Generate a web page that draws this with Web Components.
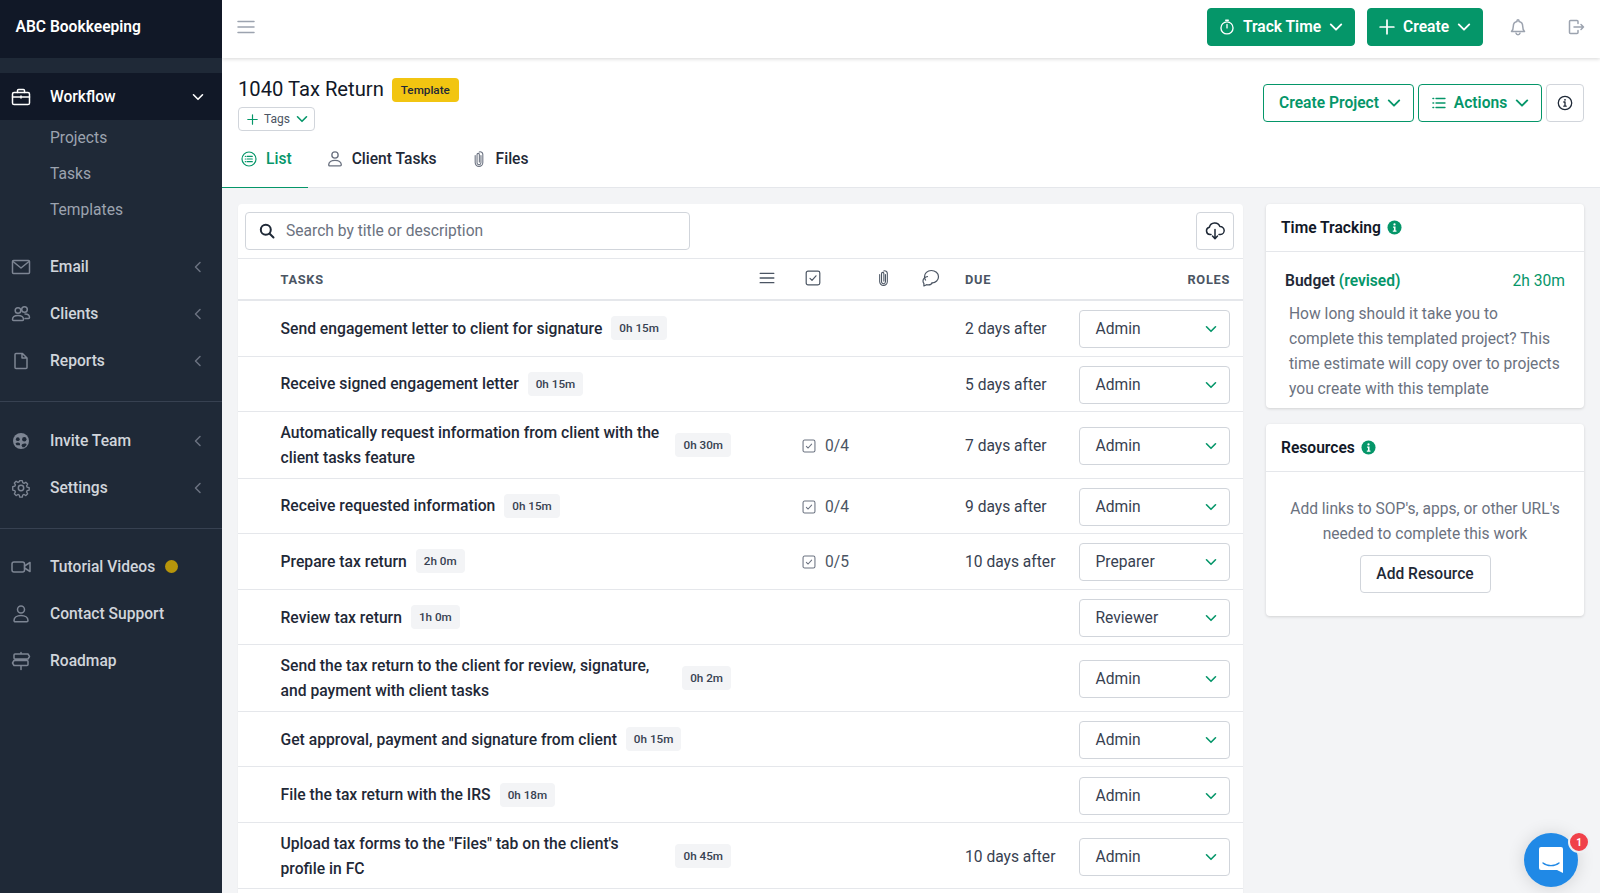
<!DOCTYPE html>
<html lang="en"><head><meta charset="utf-8"><title>1040 Tax Return</title>
<style>
html,body{margin:0;padding:0;height:893px;overflow:hidden;background:#f3f4f6;font-family:Roboto,"Liberation Sans",sans-serif;color:#1f2937}
</style></head><body>
<app-shell>
  <app-sidebar slot="sidebar">
    <div slot="brand">ABC Bookkeeping</div>
    <nav-item icon="briefcase" caret="down" active>Workflow</nav-item>
    <sub-item>Projects</sub-item><sub-item>Tasks</sub-item><sub-item>Templates</sub-item>
    <nav-gap h="15.5"></nav-gap>
    <nav-item icon="mail" caret="left">Email</nav-item>
    <nav-item icon="users" caret="left">Clients</nav-item>
    <nav-item icon="doc" caret="left">Reports</nav-item>
    <nav-gap h="17.5" line after="15.5"></nav-gap>
    <nav-item icon="team" caret="left">Invite Team</nav-item>
    <nav-item icon="gear" caret="left">Settings</nav-item>
    <nav-gap h="17" line after="14.7"></nav-gap>
    <nav-item icon="video" dot>Tutorial Videos</nav-item>
    <nav-item icon="user">Contact Support</nav-item>
    <nav-item icon="sign">Roadmap</nav-item>
  </app-sidebar>
  <top-bar slot="top"></top-bar>
  <page-head slot="head"></page-head>
  <task-card slot="list">
    <task-row time="0h 15m" due="2 days after" role="Admin">Send engagement letter to client for signature</task-row>
    <task-row time="0h 15m" due="5 days after" role="Admin">Receive signed engagement letter</task-row>
    <task-row time="0h 30m" due="7 days after" role="Admin" checks="0/4">Automatically request information from client with the client tasks feature</task-row>
    <task-row time="0h 15m" due="9 days after" role="Admin" checks="0/4">Receive requested information</task-row>
    <task-row time="2h 0m" due="10 days after" role="Preparer" checks="0/5">Prepare tax return</task-row>
    <task-row time="1h 0m" role="Reviewer">Review tax return</task-row>
    <task-row time="0h 2m" role="Admin">Send the tax return to the client for review, signature, and payment with client tasks</task-row>
    <task-row time="0h 15m" role="Admin">Get approval, payment and signature from client</task-row>
    <task-row time="0h 18m" role="Admin">File the tax return with the IRS</task-row>
    <task-row time="0h 45m" due="10 days after" role="Admin">Upload tax forms to the "Files" tab on the client's profile in FC</task-row>
  </task-card>
  <side-panel slot="side"></side-panel>
</app-shell>
<chat-bubble></chat-bubble>
<script>
const S='fill="none" stroke="currentColor" stroke-width="1.5" stroke-linecap="round" stroke-linejoin="round"';
const ICONS={
 briefcase:`<svg viewBox="0 0 20 20" ${S}><rect x="1.5" y="5.5" width="17" height="12" rx="1.6"/><path d="M6.5 5.500V3.600c0-.6.5-1.100 1.100-1.100h4.800c.6 0 1.100.5 1.100 1.100v1.900M1.500 10h17M10 9v2"/></svg>`,
 mail:`<svg viewBox="0 0 20 20" ${S} stroke-width="1.2"><rect x="1.5" y="3.5" width="17" height="13" rx="1"/><path d="M2 4.500l8 6.500 8-6.500"/></svg>`,
 users:`<svg viewBox="0 0 20 20" ${S} stroke-width="1.2"><circle cx="7" cy="6.500" r="2.800"/><circle cx="13.500" cy="5.500" r="2.800"/><path d="M1.500 15.500c0-2.800 2.300-4 5.500-4s5.500 1.200 5.500 4c0 .6-.4 1-1 1h-9c-.6 0-1-.4-1-1zM14 10c2.700 0 4.500 1.200 4.500 3.500 0 .6-.4 1-1 1H14"/></svg>`,
 doc:`<svg viewBox="0 0 20 20" ${S} stroke-width="1.2"><path d="M5 2.500h6.500L16 7v9.500c0 .6-.5 1-1 1H5c-.6 0-1-.4-1-1v-13c0-.6.4-1 1-1zM11 2.500V7h5"/></svg>`,
 team:`<svg viewBox="0 0 20 20"><circle cx="10" cy="10" r="8" fill="currentColor"/><circle cx="6.800" cy="8.200" r="1.900" fill="#1f2937"/><circle cx="13.300" cy="8.200" r="2.200" fill="#1f2937"/><path d="M4.500 12.500c1-1.200 3.500-1.200 4.500 0v1.800H5.600zM10.500 14.500c0-2.400 5.500-2.800 5-.5l-2 2.200h-2z" fill="#1f2937"/></svg>`,
 gear:`<svg viewBox="0 0 20 20" ${S} stroke-width="1.2"><circle cx="10" cy="10" r="2.700"/><path d="M8.600 1.800h2.800l.5 2.300 1.500.7 2-1.200 2 2-1.200 2 .6 1.500 2.300.6v2.600l-2.300.6-.6 1.500 1.200 2-2 2-2-1.200-1.500.6-.5 2.300H8.600l-.5-2.300-1.500-.6-2 1.200-2-2 1.200-2-.7-1.500-2.300-.6V8.600l2.300-.6.700-1.500-1.200-2 2-2 2 1.200 1.500-.7z" transform="translate(1 1) scale(.9)"/></svg>`,
 video:`<svg viewBox="0 0 20 20" ${S} stroke-width="1.200"><rect x="1" y="5" width="12.500" height="10" rx="2"/><path d="M13.500 9l5.500-3.500v9L13.500 11"/></svg>`,
 user:`<svg viewBox="0 0 20 20" ${S} stroke-width="1.200"><circle cx="10" cy="5.500" r="3.500"/><path d="M3 16.500c0-3 3-5 7-5s7 2 7 5c0 .8-.5 1.200-1.200 1.200H4.200c-.7 0-1.200-.4-1.200-1.200z"/></svg>`,
 sign:`<svg viewBox="0 0 20 20" ${S} stroke-width="1.200"><path d="M4 3h13l1.500 2.500L17 8H4c-.7 0-1-.4-1-1V4c0-.6.3-1 1-1zM16 9.500H3L1.500 12 3 14.500h13c.7 0 1-.4 1-1v-3c0-.6-.3-1-1-1zM10 1.500V3M10 8v1.500M10 14.500v4"/></svg>`,
 down:`<svg viewBox="0 0 12 12" fill="none" stroke="currentColor" stroke-width="1.600" stroke-linecap="round" stroke-linejoin="round"><path d="M1.500 3.800L6 8.300l4.500-4.500"/></svg>`,
 left:`<svg viewBox="0 0 12 12" fill="none" stroke="currentColor" stroke-width="1.500" stroke-linecap="round" stroke-linejoin="round"><path d="M8 1.500L3.500 6 8 10.500"/></svg>`,
 menu:`<svg viewBox="0 0 18 14" fill="none" stroke="currentColor" stroke-width="1.500" stroke-linecap="round"><path d="M1 1.500h16M1 7h16M1 12.500h16"/></svg>`,
 stopwatch:`<svg viewBox="0 0 18 18" fill="none" stroke="currentColor" stroke-width="1.500" stroke-linecap="round"><circle cx="9" cy="10" r="6.800"/><path d="M9 6.200V10M7.500 1.400h3"/></svg>`,
 plus:`<svg viewBox="0 0 14 14" fill="none" stroke="currentColor" stroke-width="1.500" stroke-linecap="round"><path d="M7 1v12M1 7h12"/></svg>`,
 bell:`<svg viewBox="0 0 18 18" ${S} stroke-width="1.200"><path d="M9 1.800a1 1 0 011 1v.6c2.300.5 3.700 2.400 3.700 4.800 0 3 .8 4.200 1.800 5.300H2.500c1-1.100 1.800-2.300 1.800-5.300 0-2.400 1.400-4.300 3.700-4.800v-.6a1 1 0 011-1zM7 15.200c.2 1 1 1.500 2 1.500s1.800-.5 2-1.500"/></svg>`,
 logout:`<svg viewBox="0 0 18 18" ${S} stroke-width="1.200"><path d="M11 5.500V3.500c0-.6-.4-1-1-1H3.500c-.6 0-1 .4-1 1v11c0 .6.4 1 1 1H10c.6 0 1-.4 1-1v-2M7 9h9.500M14 6.500L16.500 9 14 11.500"/></svg>`,
 lines:`<svg viewBox="0 0 14 12" fill="none" stroke="currentColor" stroke-width="1.300" stroke-linecap="round"><path d="M4 1.500h9M4 6h9M4 10.500h9"/><path d="M1 1.500h.6M1 6h.6M1 10.500h.6" stroke-width="1.600"/></svg>`,
 info:`<svg viewBox="0 0 16 16" fill="none" stroke="currentColor" stroke-width="1.300"><circle cx="8" cy="8" r="6.700"/><path d="M8 7v4M6.800 11.200h2.400M6.800 7h1.200" stroke-linecap="round"/><circle cx="8" cy="4.800" r=".9" fill="currentColor" stroke="none"/></svg>`,
 listc:`<svg viewBox="0 0 16 16" fill="none" stroke="currentColor" stroke-width="1.200" stroke-linecap="round"><circle cx="8" cy="8" r="7"/><path d="M6 5.300h5.300M6 8h5.300M6 10.700h5.300M4.300 5.300h.2M4.300 8h.2M4.300 10.700h.2"/></svg>`,
 clip:`<svg viewBox="0 0 12 18" fill="none" stroke="currentColor" stroke-width="1.200" stroke-linecap="round"><path d="M8.200 5v8.200a2.200 2.200 0 01-4.400 0V4a1.300 1.300 0 012.600 0v8.500"/><path d="M1.700 5v8a4.300 4.300 0 008.600 0V3.800a3 3 0 00-4-2.700"/></svg>`,
 search:`<svg viewBox="0 0 16 16" fill="none" stroke="currentColor" stroke-width="2" stroke-linecap="round"><circle cx="6.800" cy="6.800" r="5"/><path d="M10.700 10.700L14.500 14.500"/></svg>`,
 cloud:`<svg viewBox="0 0 20 20" ${S} stroke-width="1.300"><path d="M6 13.500H5a3.700 3.700 0 01-.6-7.300 5.500 5.500 0 0110.500-.6 3.900 3.900 0 01.6 7.900H14"/><path d="M10 8.500v9M7.500 15l2.500 2.700L12.500 15"/></svg>`,
 check:`<svg viewBox="0 0 16 16" fill="none" stroke="currentColor" stroke-width="1.200" stroke-linejoin="round" stroke-linecap="round"><rect x="1.200" y="1.200" width="13.600" height="13.600" rx="1.800"/><path d="M5 8.300l2 2 4-4.500"/></svg>`,
 comment:`<svg viewBox="0 0 20 18" fill="none" stroke="currentColor" stroke-width="1.200" stroke-linejoin="round"><path d="M4.800 11.500c-.8-1-1.300-2.300-1.300-3.800C3.500 4.300 6.300 1.500 10.300 1.500s7.200 2.800 7.200 6.200c0 3.300-2.800 6-6.300 6.300"/><path d="M7 7.500c-3 .4-5 2.200-5 4.500 0 1 .3 1.800.9 2.500v2.500l2.600-1.300c2.700.6 5.200-.4 5.900-2.500"/></svg>`,
 solidinfo:`<svg viewBox="0 0 16 16"><circle cx="8" cy="8" r="7.500" fill="currentColor"/><circle cx="8" cy="4.700" r="1.200" fill="#fff"/><path d="M6.500 7h2.600v4.300h1v1.200H6.200v-1.200h1.200V8.200h-.9z" fill="#fff"/></svg>`
};
function def(name,html){
  customElements.define(name,class extends HTMLElement{
    constructor(){super();this.attachShadow({mode:'open'})}
    connectedCallback(){
      if(this._d)return;this._d=1;
      const get=k=>this.getAttribute(k);
      this.shadowRoot.innerHTML=typeof html==='function'?html(get,this):html;
    }
  });
}
def('x-icon',(g)=>`<style>:host{display:inline-flex;flex:none;width:${g('w')||16}px;height:${g('h')||g('w')||16}px}svg{width:100%;height:100%;display:block}</style>${ICONS[g('name')]||''}`);
def('app-shell',`<style>
:host{display:grid;grid-template-columns:222px 1fr;height:893px;overflow:hidden}
.side{grid-row:1;height:893px}
.main{display:flex;flex-direction:column;min-width:0;height:893px;overflow:hidden}
.body{display:flex;gap:23px;padding:16px 16px 0;align-items:flex-start;flex:1;min-height:0}
.l{flex:none;width:1005px}.r{flex:1;min-width:0}
</style><div class="side"><slot name="sidebar"></slot></div>
<div class="main"><slot name="top"></slot><slot name="head"></slot>
<div class="body"><div class="l"><slot name="list"></slot></div><div class="r"><slot name="side"></slot></div></div></div>`);
def('app-sidebar',`<style>
:host{display:block;height:893px;background:#1f2937;font-family:Roboto,sans-serif}
.brand{height:58px;background:#111827;color:#fff;font-size:15.600px;font-weight:600;display:flex;align-items:center;padding-left:15.500px;padding-bottom:4px;box-sizing:border-box;margin-bottom:15px}
</style><div class="brand"><slot name="brand"></slot></div><slot></slot>`);
def('nav-item',(g,el)=>`<style>
:host{display:flex;align-items:center;height:47px;color:#d1d5db;font-size:15.600px;font-weight:500;background:${el.hasAttribute('active')?'#111827':'transparent'};${el.hasAttribute('active')?'color:#fff':''}}
.i{width:50px;display:flex;padding-left:11px;box-sizing:border-box;color:${el.hasAttribute('active')?'#fff':'#7d8593'}}
.t{flex:1;display:flex;align-items:center}
.d{width:13px;height:13px;border-radius:50%;background:#b7950b;margin-left:10px}
.c{width:14px;margin-right:17px;display:flex;justify-content:center;color:${el.hasAttribute('active')?'#fff':'#6b7280'}}
</style><span class="i"><x-icon name="${g('icon')}" w="20"></x-icon></span>
<span class="t"><slot></slot>${el.hasAttribute('dot')?'<span class="d"></span>':''}</span>
<span class="c">${g('caret')?`<x-icon name="${g('caret')}" w="12"></x-icon>`:''}</span>`);
def('sub-item',`<style>:host{display:flex;align-items:center;height:36px;padding-left:50px;color:#9ca3af;font-size:15.600px}</style><slot></slot>`);
def('nav-gap',(g,el)=>`<style>:host{display:block;box-sizing:border-box;height:${g('h')}px;${el.hasAttribute('line')?`border-bottom:1px solid #374151;margin-bottom:${g('after')}px`:''}}</style>`);
def('top-bar',`<style>
:host{display:flex;align-items:center;height:58px;background:#fff;box-shadow:0 1px 4px rgba(0,0,0,.16);position:relative;z-index:2;padding:0 0 4px 15px;box-sizing:border-box;flex:none}
.m{color:#9ca3af;display:flex;flex:1}
.g{margin-right:12px}
.bell{color:#9ca3af;margin:0 0 0 26px;display:flex}.out{color:#9ca3af;margin:0 15px 0 40px;display:flex}
</style><span class="m"><x-icon name="menu" w="18" h="14"></x-icon></span>
<ui-btn class="g" kind="solid" icon="stopwatch" w="148" caret>Track Time</ui-btn>
<ui-btn kind="solid" icon="plus" w="116" caret>Create</ui-btn>
<span class="bell"><x-icon name="bell" w="18"></x-icon></span>
<span class="out"><x-icon name="logout" w="18"></x-icon></span>`);
def('ui-btn',(g,el)=>{const k=g('kind');
 const st={solid:'background:#059669;color:#fff;border:1px solid #059669',line:'background:#fff;color:#059669;border:1px solid #059669',plain:'background:#fff;color:#1f2937;border:1px solid #d1d5db'}[k];
 return `<style>:host{display:inline-flex;flex:none}
 .b{display:flex;align-items:center;justify-content:center;gap:${g('gap')||8}px;box-sizing:border-box;height:38px;width:${g('w')}px;padding-left:${g('pl')||0}px;border-radius:4px;font:${g('fw')||600} 15.600px Roboto,sans-serif;${st}}
 </style><div class="b" part="b">${g('icon')?`<x-icon name="${g('icon')}" w="${g('iw')||16}"></x-icon>`:''}<span><slot></slot></span>${el.hasAttribute('caret')?'<x-icon name="down" w="14"></x-icon>':''}</div>`});
def('page-head',`<style>
:host{display:block;background:#fff;border-bottom:1px solid #e5e7eb;height:130px;box-sizing:border-box;flex:none;position:relative}
.top{display:flex;justify-content:space-between;padding:20px 16px 0}
.ttl{display:flex;align-items:center;gap:8px;height:24px}
h1{margin:-2px 0 0;font:400 20.200px Roboto,sans-serif;color:#111827}
.bd{background:#f2c511;color:#1f2937;font-size:11.700px;font-weight:500;border-radius:4px;height:24px;padding:0 9px;display:flex;align-items:center}
.tags{display:inline-flex;align-items:center;gap:6px;height:24px;box-sizing:border-box;border:1px solid #d1d5db;border-radius:4px;padding:0 8px;margin-top:5px;width:77px;color:#4b5563;font-size:12px}
.tags x-icon{color:#059669}
.acts{display:flex;gap:4px;padding-top:5.500px}
.tabs{display:flex;position:absolute;left:0;bottom:-1px;height:56px}
.tab{display:flex;align-items:center;gap:9px;padding:0 15px 2px 19px;font-size:15.600px;font-weight:500;color:#1f2937;box-sizing:border-box;border-bottom:1px solid transparent}
.tab x-icon{color:#6b7280}
.tab.on{color:#059669;border-bottom-color:#059669;padding-right:16px}.tab.on x-icon{color:#059669}
</style>
<div class="top"><div><div class="ttl"><h1>1040 Tax Return</h1><span class="bd">Template</span></div>
<div class="tags"><x-icon name="plus" w="11"></x-icon>Tags<x-icon name="down" w="12"></x-icon></div></div>
<div class="acts"><ui-btn kind="line" w="151" pl="3" caret>Create Project</ui-btn><ui-btn kind="line" icon="lines" iw="14" w="124" pl="1" caret>Actions</ui-btn><ui-btn kind="plain" w="38"><x-icon name="info" w="16" style="display:flex"></x-icon></ui-btn></div></div>
<div class="tabs"><div class="tab on"><x-icon name="listc" w="16"></x-icon>List</div><div class="tab"><x-icon name="user" w="18" style="margin:0 -1px"></x-icon>Client Tasks</div><div class="tab"><x-icon name="clip" w="12" h="16" style="margin:0 2px"></x-icon>Files</div></div>`);
def('task-card',`<style>
:host{display:block;background:#fff;border-radius:4px 4px 0 0;box-shadow:0 1px 2px rgba(0,0,0,.05);overflow:hidden;padding-bottom:24px}
.bar{display:flex;justify-content:space-between;padding:8px 9px 8px 7px;border-bottom:1px solid #e5e7eb;height:55px;box-sizing:border-box;align-items:flex-start}
.search{width:445px;height:38px;box-sizing:border-box;border:1px solid #d1d5db;border-radius:4px;display:flex;align-items:center;padding-left:13px;gap:11px;font-size:15.600px;color:#6b7280}
.search x-icon{color:#1f2937}
.dl{width:38px;height:38px;box-sizing:border-box;border:1px solid #d1d5db;border-radius:4px;display:flex;align-items:center;justify-content:center;color:#1f2937}
.hd{display:grid;grid-template-columns:42.500px 450.500px 234px 114px 151px;height:42px;align-items:center;border-bottom:2px solid #e5e7eb;box-sizing:border-box;font-size:12.800px;font-weight:700;letter-spacing:.7px;color:#4b5563}
.ic{display:flex;align-items:center;color:#4b5563;margin-top:-2px}
.hd .a{text-align:right}
</style>
<div class="bar"><div class="search"><x-icon name="search" w="16"></x-icon>Search by title or description</div><div class="dl"><x-icon name="cloud" w="20"></x-icon></div></div>
<div class="hd"><span></span><span>TASKS</span>
<span class="ic"><x-icon name="menu" w="16" h="12" style="margin-left:28px"></x-icon><x-icon name="check" w="16" style="margin-left:30px"></x-icon><x-icon name="clip" w="11" h="16" style="margin-left:57px"></x-icon><x-icon name="comment" w="20" h="18" style="margin-left:32px"></x-icon></span>
<span>DUE</span><span class="a">ROLES</span></div><slot></slot>`);
def('task-row',(g)=>`<style>
:host{display:grid;grid-template-columns:42.500px 450.500px 234px 114px 151px;align-items:center;min-height:54.600px;box-sizing:content-box;border-bottom:1px solid #e5e7eb;font-size:15.600px}
.t{grid-column:2;display:flex;align-items:center;padding:7.700px 0}
.x{font-weight:500;line-height:25px;font-size:15.700px;color:#1f2937;flex:0 1 auto}
.b{flex:none;margin-left:9px;background:#f3f4f6;border-radius:4px;height:24px;padding:0 8px;display:flex;align-items:center;font-size:11.700px;font-weight:500;color:#374151}
.c{padding-left:71px;display:flex;align-items:center;gap:9px;color:#4b5563;margin-top:2px}.c x-icon{color:#6b7280}
.d{color:#374151;margin-top:2px}
role-select{margin-top:2px}
</style><div class="t"><span class="x"><slot></slot></span><span class="b">${g('time')}</span></div>
<div class="c">${g('checks')?`<x-icon name="check" w="14"></x-icon>${g('checks')}`:''}</div>
<div class="d">${g('due')||''}</div>
<role-select>${g('role')}</role-select>`);
def('role-select',`<style>
:host{display:flex;align-items:center;justify-content:space-between;height:38px;box-sizing:border-box;border:1px solid #d1d5db;border-radius:4px;padding:0 12px 0 15.500px;font-size:15.600px;color:#374151}
x-icon{color:#059669}
</style><slot></slot><x-icon name="down" w="12"></x-icon>`);
def('side-card',(g)=>`<style>
:host{display:block;background:#fff;border-radius:4px;box-shadow:0 1px 3px rgba(0,0,0,.14);margin-bottom:16px;height:${g('h')}px;overflow:hidden}
.h{height:48px;box-sizing:border-box;border-bottom:1px solid #e5e7eb;display:flex;align-items:center;gap:6px;padding:0 0 0 15px;font-weight:600;font-size:15.600px;color:#111827}
.h x-icon{color:#059669}
</style><div class="h">${g('title')}<x-icon name="solidinfo" w="15"></x-icon></div><slot></slot>`);
def('side-panel',`<style>
:host{display:block;font-size:15.600px}
.row{display:flex;justify-content:space-between;padding:17px 19px 0 19px;line-height:25px;font-weight:600;color:#1f2937}
.row em{font-style:normal;color:#059669}.row b{font-weight:400;color:#059669}
.p{margin:8px 24px 0 23px;line-height:25px;color:#6b7280}
.res{text-align:center;padding:25px 10px 0;line-height:25px;color:#6b7280}
.btn{display:flex;justify-content:center;margin-top:8px}
</style>
<side-card title="Time Tracking" h="204"><div class="row"><span>Budget <em>(revised)</em></span><b>2h 30m</b></div>
<div class="p">How long should it take you to complete this templated project? This time estimate will copy over to projects you create with this template</div></side-card>
<side-card title="Resources" h="192"><div class="res">Add links to SOP's, apps, or other URL's<br>needed to complete this work</div>
<div class="btn"><ui-btn kind="plain" w="131" fw="500">Add Resource</ui-btn></div></side-card>`);
def('chat-bubble',`<style>
:host{position:fixed;left:1524px;top:833px;width:54px;height:54px;border-radius:50%;background:#2089e6;box-shadow:0 1px 18px rgba(0,0,0,.14);display:flex;align-items:center;justify-content:center}
.n{position:absolute;left:46px;top:0;width:18px;height:18px;border-radius:50%;background:#f0414a;border:2px solid #eef0f3;color:#fff;font:700 10px Roboto,sans-serif;display:flex;align-items:center;justify-content:center;box-sizing:content-box;margin:-2px}
</style><svg width="24" height="26" viewBox="0 0 24 26"><path d="M2 0h20a2 2 0 012 2v24l-6-3H2a2 2 0 01-2-2V2a2 2 0 012-2z" fill="#fff"/><path d="M4 16c4 3.500 12 3.500 16 0" fill="none" stroke="#2089e6" stroke-width="1.400" stroke-linecap="round"/></svg><span class="n">1</span>`);
</script>
</body></html>
